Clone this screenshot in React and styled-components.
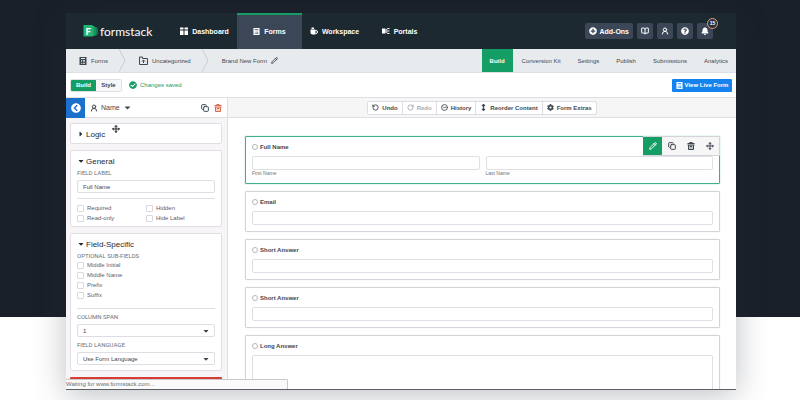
import React from "react";
import styled, { createGlobalStyle } from "styled-components";
import {
  BookOpen,
  CircleChevronDown,
  Copy,
  Move,
  MoveVertical,
  Pencil,
  RotateCcw,
  RotateCw,
  UserRound,
} from "lucide-react";
import {
  FaBell,
  FaCaretDown,
  FaCaretRight,
  FaCheckCircle,
  FaChevronCircleLeft,
  FaCog,
  FaPlusCircle,
  FaQuestionCircle,
} from "react-icons/fa";

const tabs = ["Build", "Conversion Kit", "Settings", "Publish", "Submissions", "Analytics"];
const subFields = ["Middle Initial", "Middle Name", "Prefix", "Suffix"];
const questions = ["Email", "Short Answer", "Short Answer"];

const FormIcon = ({ size = 8 }) => (
  <svg width={size} height={size} viewBox="0 0 16 16" aria-hidden="true">
    <path
      fill="currentColor"
      fillRule="evenodd"
      d="M1 0h14v16H1zM4 2v2h8V2zM4 6v1.5h2V6zm3.500 0v1.5H12V6zM4 9v1.5h2V9zm3.500 0v1.5H12V9zM4 12v1.5h2V12zm3.500 0v1.5H12V12z"
    />
  </svg>
);

const DashboardIcon = () => (
  <svg width="8" height="8" viewBox="0 0 16 16" aria-hidden="true">
    <path fill="currentColor" d="M0 1h7v4H0zM9 1h7v4H9zM0 7h7v9H0zM9 7h7v9H9z" />
  </svg>
);

const WorkspaceIcon = () => (
  <svg width="8" height="8" viewBox="0 0 16 16" aria-hidden="true">
    <path fill="currentColor" d="M3 1h5v3H3zM1 5h10v10H5a4 4 0 0 1-4-4z" />
    <path fill="none" stroke="currentColor" strokeWidth="2" d="M11 7h1a3 3 0 0 1 0 6h-1" />
  </svg>
);

const PortalsIcon = () => (
  <svg width="8" height="8" viewBox="0 0 16 16" aria-hidden="true">
    <path fill="currentColor" d="M0 3h7v10H0z" />
    <path fill="none" stroke="currentColor" strokeWidth="2" d="M7 8h8M8 7l3-4h4M8 9l3 4h4" />
  </svg>
);

const FolderIcon = () => (
  <svg width="9" height="9" viewBox="0 0 18 18" aria-hidden="true">
    <path
      fill="none"
      stroke="currentColor"
      strokeWidth="2"
      d="M1 2h6v3h10v12H1zM9 14V8M6 11l3-3 3 3"
    />
  </svg>
);

const TrashIcon = () => (
  <svg width="8" height="8" viewBox="0 0 16 16" aria-hidden="true">
    <path fill="currentColor" fillOpacity="0.3" d="M3 6h10v9H3z" />
    <path fill="none" stroke="currentColor" strokeWidth="2" d="M1 3h14M3 6v9h10V6M1 6h14M6 9h4M5 1h6" />
  </svg>
);

const Chevron = () => (
  <svg width="7" height="23" viewBox="0 0 7 23" aria-hidden="true">
    <path fill="none" stroke="#c9ced3" d="M0 0l6 11.5L0 23" />
  </svg>
);

const LogoMark = () => (
  <svg width="15" height="12" viewBox="0 0 30 24" aria-hidden="true">
    <path fill="#137a50" d="M22 4h5l3 4v9l-3 4h-5z" />
    <path fill="#16935c" d="M18 2h5l3 4v13l-3 3h-5z" />
    <path fill="#21b573" d="M1 0h17l3 3v18l-3 2H1z" />
    <text x="5" y="19" fill="#fff" fontFamily="Lato, sans-serif" fontSize="19" fontWeight="900">
      F
    </text>
  </svg>
);

const App = () => {
  return (
    <Page>
      <GlobalStyle />
      <Window>
        <Header>
          <Logo href="#home">
            <LogoMark />
            formstack
          </Logo>
          <Nav>
            <NavLink href="#dashboard">
              <DashboardIcon />
              Dashboard
            </NavLink>
            <NavLink href="#forms" $active>
              <FormIcon size={7} />
              Forms
            </NavLink>
            <NavLink href="#workspace">
              <WorkspaceIcon />
              Workspace
            </NavLink>
            <NavLink href="#portals">
              <PortalsIcon />
              Portals
            </NavLink>
          </Nav>
          <HeaderActions>
            <HeaderButton>
              <FaPlusCircle size={8} />
              Add-Ons
            </HeaderButton>
            <HeaderButton aria-label="Guide">
              <BookOpen size={8} strokeWidth={3} />
            </HeaderButton>
            <HeaderButton aria-label="Account">
              <UserRound size={8} strokeWidth={3} />
            </HeaderButton>
            <HeaderButton aria-label="Help">
              <FaQuestionCircle size={8} />
            </HeaderButton>
            <HeaderButton aria-label="Notifications">
              <FaBell size={8} />
              <Badge>15</Badge>
            </HeaderButton>
          </HeaderActions>
        </Header>

        <SubHeader>
          <Crumb href="#forms">
            <FormIcon />
            Forms
          </Crumb>
          <Chevron />
          <Crumb href="#uncategorized">
            <FolderIcon />
            Uncategorized
          </Crumb>
          <Chevron />
          <Crumb href="#form">
            Brand New Form
            <Pencil size={7} strokeWidth={3} />
          </Crumb>
          <Tabs>
            {tabs.map((tab, i) => (
              <Tab key={tab} href="#tab" $active={i === 0}>
                {tab}
              </Tab>
            ))}
          </Tabs>
        </SubHeader>

        <ModeBar>
          <Toggle>
            <ToggleButton $active>Build</ToggleButton>
            <ToggleButton>Style</ToggleButton>
          </Toggle>
          <Saved>
            <FaCheckCircle size={8} />
            Changes saved
          </Saved>
          <LiveButton>
            <FormIcon size={7} />
            View Live Form
          </LiveButton>
        </ModeBar>

        <Main>
          <Sidebar>
            <SidebarHeader>
              <BackButton aria-label="Back">
                <FaChevronCircleLeft size={10} />
              </BackButton>
              <FieldPicker>
                <UserRound size={8} strokeWidth={3} />
                Name
                <FaCaretDown size={9} />
              </FieldPicker>
              <IconButton aria-label="Duplicate field">
                <Copy size={8} strokeWidth={3} />
              </IconButton>
              <IconButton aria-label="Delete field" $danger>
                <TrashIcon />
              </IconButton>
            </SidebarHeader>
            <Panels>
              <Panel>
                <PanelTitle>
                  <FaCaretRight size={8} />
                  Logic
                </PanelTitle>
              </Panel>
              <Panel>
                <PanelTitle>
                  <FaCaretDown size={8} />
                  General
                </PanelTitle>
                <Label htmlFor="field-label">Field Label</Label>
                <TextInput id="field-label" defaultValue="Full Name" />
                <Divider />
                <CheckGrid>
                  {["Required", "Hidden", "Read-only", "Hide Label"].map((name) => (
                    <Check key={name}>
                      <Checkbox type="checkbox" />
                      {name}
                    </Check>
                  ))}
                </CheckGrid>
              </Panel>
              <Panel>
                <PanelTitle>
                  <FaCaretDown size={8} />
                  Field-Specific
                </PanelTitle>
                <Label as="div">Optional Sub-Fields</Label>
                {subFields.map((name) => (
                  <Check key={name}>
                    <Checkbox type="checkbox" />
                    {name}
                  </Check>
                ))}
                <Divider $spaced />
                <Label htmlFor="column-span">Column Span</Label>
                <SelectWrap>
                  <Select id="column-span">
                    <option>1</option>
                  </Select>
                  <FaCaretDown size={8} />
                </SelectWrap>
                <Label htmlFor="field-language">Field Language</Label>
                <SelectWrap>
                  <Select id="field-language">
                    <option>Use Form Language</option>
                  </Select>
                  <FaCaretDown size={8} />
                </SelectWrap>
              </Panel>
              <DeleteButton aria-label="Delete" />
            </Panels>
          </Sidebar>

          <Builder>
            <Toolbar>
              <ToolGroup>
                <Tool>
                  <RotateCcw size={7} strokeWidth={3} />
                  Undo
                </Tool>
                <Tool disabled>
                  <RotateCw size={7} strokeWidth={3} />
                  Redo
                </Tool>
                <Tool>
                  <CircleChevronDown size={7} strokeWidth={3} />
                  History
                </Tool>
                <Tool>
                  <MoveVertical size={7} strokeWidth={4} />
                  Reorder Content
                </Tool>
                <Tool>
                  <FaCog size={7} />
                  Form Extras
                </Tool>
              </ToolGroup>
            </Toolbar>
            <Canvas>
              <Question $selected>
                <QuestionTitle as="div">Full Name</QuestionTitle>
                <NameRow>
                  <NameField>
                    <Answer id="first-name" />
                    <Caption htmlFor="first-name">First Name</Caption>
                  </NameField>
                  <NameField>
                    <Answer id="last-name" />
                    <Caption htmlFor="last-name">Last Name</Caption>
                  </NameField>
                </NameRow>
                <QuestionActions>
                  <Action type="button" aria-label="Edit" $active>
                    <Pencil size={8} strokeWidth={3} />
                  </Action>
                  <Action type="button" aria-label="Duplicate">
                    <Copy size={8} strokeWidth={3} />
                  </Action>
                  <Action type="button" aria-label="Delete">
                    <TrashIcon />
                  </Action>
                  <Action type="button" aria-label="Move">
                    <Move size={8} strokeWidth={3} />
                  </Action>
                </QuestionActions>
              </Question>
              {questions.map((title, i) => (
                <Question key={i}>
                  <QuestionTitle htmlFor={`answer-${i}`}>{title}</QuestionTitle>
                  <Answer id={`answer-${i}`} />
                </Question>
              ))}
              <Question>
                <QuestionTitle htmlFor="long-answer">Long Answer</QuestionTitle>
                <LongAnswer id="long-answer" />
              </Question>
            </Canvas>
          </Builder>
        </Main>
        <StatusBar>Waiting for www.formstack.com...</StatusBar>
        <Cursor>
          <Move size={8} strokeWidth={3} />
        </Cursor>
      </Window>
    </Page>
  );
};

export default App;

const GlobalStyle = createGlobalStyle`
  *, *::before, *::after {
    box-sizing: border-box;
  }
  body {
    margin: 0;
    font-family: "Liberation Sans", Arial, sans-serif;
    font-size: 6px;
    color: #3f4650;
  }
  button, input, select, textarea {
    font: inherit;
    color: inherit;
    margin: 0;
    padding: 0;
    border: 0;
    background: none;
  }
  a {
    color: inherit;
    text-decoration: none;
  }
  svg {
    flex: none;
  }
`;

const Page = styled.div`
  display: flex;
  height: 100vh;
  padding: 13px 64px 10px 66px;
  overflow: hidden;
  background: linear-gradient(#1a202a 317px, #fff 317px);
`;

const Window = styled.div`
  position: relative;
  display: flex;
  flex: 1;
  flex-direction: column;
  min-width: 0;
  background: #fff;
  border-bottom: 1px solid #5c6064;
  box-shadow: 0 5px 30px rgba(40, 45, 60, 0.3);
`;

const Header = styled.header`
  display: flex;
  flex: none;
  height: 36px;
  color: #fff;
  background: #1c2930;
`;

const Logo = styled.a`
  display: flex;
  align-items: center;
  gap: 2px;
  width: 106px;
  padding-left: 17px;
  font-family: Lato, sans-serif;
  font-size: 12px;
`;

const Nav = styled.nav`
  display: flex;
`;

const NavLink = styled.a`
  display: flex;
  align-items: center;
  justify-content: center;
  gap: 4px;
  width: 65px;
  font-size: 7px;
  font-weight: bold;
  background: ${({ $active }) => ($active ? "#3b4757" : "none")};
  box-shadow: ${({ $active }) => ($active ? "inset 0 2px #159d66" : "none")};
`;

const HeaderActions = styled.div`
  display: flex;
  align-items: center;
  gap: 4px;
  margin-left: auto;
  padding-right: 23px;
`;

const HeaderButton = styled.button`
  position: relative;
  display: flex;
  align-items: center;
  justify-content: center;
  gap: 2px;
  min-width: 16px;
  height: 16px;
  font-size: 7px;
  font-weight: bold;
  border-radius: 2px;
  background: #3b4757;

  &:first-child {
    padding: 0 4px;
  }
`;

const Badge = styled.span`
  position: absolute;
  top: -5px;
  right: -5px;
  width: 11px;
  height: 11px;
  border: 1px solid #e59a78;
  border-radius: 50%;
  font-size: 5px;
  line-height: 9px;
  text-align: center;
  background: #2a2f3a;
`;

const SubHeader = styled.div`
  display: flex;
  flex: none;
  align-items: center;
  height: 24px;
  border-bottom: 1px solid #dcdfe3;
  background: #e8ebee;
`;

const Crumb = styled.a`
  display: flex;
  align-items: center;
  gap: 4px;
  padding: 0 11px 0 13px;
`;

const Tabs = styled.nav`
  display: flex;
  gap: 1px;
  align-self: stretch;
  margin-left: auto;
`;

const Tab = styled.a`
  display: flex;
  align-items: center;
  padding: 0 8px;
  color: ${({ $active }) => ($active ? "#fff" : "inherit")};
  font-weight: ${({ $active }) => ($active ? "bold" : "normal")};
  background: ${({ $active }) => ($active ? "#159d66" : "none")};
`;

const ModeBar = styled.div`
  display: flex;
  flex: none;
  align-items: center;
  height: 24px;
  padding: 0 4px;
`;

const Toggle = styled.div`
  display: flex;
  border: 1px solid #e0e0e6;
  border-radius: 2px;
  overflow: hidden;
`;

const ToggleButton = styled.button`
  width: 25px;
  height: 11px;
  color: ${({ $active }) => ($active ? "#fff" : "inherit")};
  font-weight: bold;
  background: ${({ $active }) => ($active ? "#159d66" : "#f7f7f9")};
`;

const Saved = styled.span`
  display: flex;
  align-items: center;
  gap: 3px;
  margin-left: 7px;
  color: #159d66;
`;

const LiveButton = styled.button`
  display: flex;
  align-items: center;
  justify-content: center;
  gap: 2px;
  width: 60px;
  height: 13px;
  margin-left: auto;
  color: #fff;
  font-weight: bold;
  border-radius: 1px;
  background: #1583ee;
`;

const Main = styled.main`
  display: flex;
  flex: 1;
  min-height: 0;
  overflow: hidden;
  border-top: 1px solid #dedee3;
`;

const Sidebar = styled.aside`
  display: flex;
  flex: none;
  flex-direction: column;
  width: 162px;
  border-right: 1px solid #dfdde2;
  background: #f7f5f8;
`;

const SidebarHeader = styled.div`
  display: flex;
  flex: none;
  align-items: center;
  height: 20px;
  padding-right: 3px;
  border-bottom: 1px solid #dfdde2;
  background: #fff;
`;

const BackButton = styled.button`
  display: grid;
  place-items: center;
  width: 19px;
  height: 20px;
  color: #fff;
  background: #1b70cc;
`;

const FieldPicker = styled.button`
  display: flex;
  align-items: center;
  gap: 3px;
  margin: 0 auto 0 5px;
  font-size: 7px;
`;

const IconButton = styled.button`
  display: grid;
  place-items: center;
  width: 13px;
  height: 13px;
  color: ${({ $danger }) => ($danger ? "#dc6a4e" : "inherit")};
`;

const Panels = styled.div`
  display: flex;
  flex-direction: column;
  gap: 6px;
  padding: 5px 5px 0 4px;
`;

const Panel = styled.section`
  display: flex;
  flex-direction: column;
  padding: 4px 6px 3px;
  border: 1px solid #e2dee5;
  border-radius: 2px;
  background: #fff;
`;

const PanelTitle = styled.h2`
  display: flex;
  align-items: center;
  gap: 1px;
  height: 12px;
  margin: 0;
  font-size: 8px;
  font-weight: normal;
  color: #262c33;
`;

const Label = styled.label`
  margin-top: 2px;
  font-family: Roboto, sans-serif;
  line-height: 8px;
  text-transform: uppercase;
  color: #6d727a;
`;

const TextInput = styled.input`
  height: 13px;
  margin-top: 3px;
  padding: 0 5px;
  border: 1px solid #e0dce3;
  border-radius: 2px;
`;

const Divider = styled.hr`
  width: 100%;
  height: 1px;
  margin: ${({ $spaced }) => ($spaced ? "8px 0 2px" : "5px 0 4px")};
  border: 0;
  background: #e0dde3;
`;

const CheckGrid = styled.div`
  display: grid;
  grid-template-columns: 1fr 1fr;
`;

const Check = styled.label`
  display: flex;
  align-items: center;
  gap: 3px;
  height: 10px;
  color: #5d636b;
`;

const Checkbox = styled.input`
  appearance: none;
  flex: none;
  width: 7px;
  height: 7px;
  border: 1px solid #dcd8e0;
  border-radius: 1px;
  background: #fff;
`;

const SelectWrap = styled.div`
  display: flex;
  align-items: center;
  height: 13px;
  margin: 3px 0 2px;
  padding: 0 4px 0 5px;
  border: 1px solid #e0dce3;
  border-radius: 2px;
`;

const Select = styled.select`
  flex: 1;
  appearance: none;
  outline: none;
`;

const DeleteButton = styled.button`
  height: 14px;
  border-radius: 1px;
  background: #d63e35;
`;

const Builder = styled.section`
  display: flex;
  flex: 1;
  flex-direction: column;
  min-width: 0;
`;

const Toolbar = styled.div`
  display: flex;
  flex: none;
  align-items: center;
  justify-content: center;
  height: 20px;
  border-bottom: 1px solid #dedee3;
  background: #f6f6f7;
`;

const ToolGroup = styled.div`
  display: flex;
  border: 1px solid #dfdde3;
  border-radius: 2px;
  background: #fff;
`;

const Tool = styled.button`
  display: flex;
  align-items: center;
  gap: 3px;
  height: 12px;
  padding: 0 4px;
  font-weight: bold;

  & + & {
    border-left: 1px solid #dfdde3;
  }

  &:disabled {
    color: #a6aab0;
  }
`;

const Canvas = styled.form`
  display: flex;
  flex-direction: column;
  gap: 7px;
  padding: 18px 16px 0 17px;
`;

const Question = styled.div`
  position: relative;
  display: flex;
  flex-direction: column;
  gap: 5px;
  padding: 6px;
  border: 1px solid ${({ $selected }) => ($selected ? "#3faf87" : "#d3d3d9")};
  border-radius: 1px;
  box-shadow: 0 0 1px ${({ $selected }) => ($selected ? "#3faf87" : "#d3d3d9")};
`;

const QuestionTitle = styled.label`
  display: flex;
  align-items: center;
  gap: 2px;
  height: 8px;
  font-weight: bold;

  &::before {
    content: "";
    width: 6px;
    height: 6px;
    border: 1px solid #b3b6bb;
    border-radius: 50%;
  }
`;

const NameRow = styled.div`
  display: flex;
  gap: 6px;
`;

const NameField = styled.div`
  display: flex;
  flex: 1;
  flex-direction: column;
`;

const Answer = styled.input`
  width: 100%;
  height: 14px;
  padding: 0 4px;
  border: 1px solid #e0dfe4;
  border-radius: 2px;
`;

const LongAnswer = styled.textarea`
  height: 60px;
  border: 1px solid #e0dfe4;
  border-radius: 2px;
  resize: none;
`;

const Caption = styled.label`
  font-size: 5px;
  line-height: 7px;
  color: #6d727a;
`;

const QuestionActions = styled.div`
  position: absolute;
  top: -1px;
  right: -1px;
  display: flex;
  border: 1px solid #d3d3d9;
  border-left: 0;
  background: #f6f6f7;
`;

const Action = styled.button`
  display: grid;
  place-items: center;
  width: 19px;
  height: 18px;
  color: ${({ $active }) => ($active ? "#fff" : "inherit")};
  background: ${({ $active }) => ($active ? "#159d66" : "none")};
`;

const StatusBar = styled.div`
  position: absolute;
  bottom: 0;
  left: 0;
  width: 222px;
  height: 10px;
  line-height: 9px;
  color: #6d6d70;
  border: solid #c9c9cc;
  border-width: 1px 1px 0 0;
  border-radius: 0 2px 0 0;
  background: #fafafa;
`;

const Cursor = styled.span`
  position: absolute;
  top: 112px;
  left: 46px;
  display: flex;
  color: #22272d;
`;
